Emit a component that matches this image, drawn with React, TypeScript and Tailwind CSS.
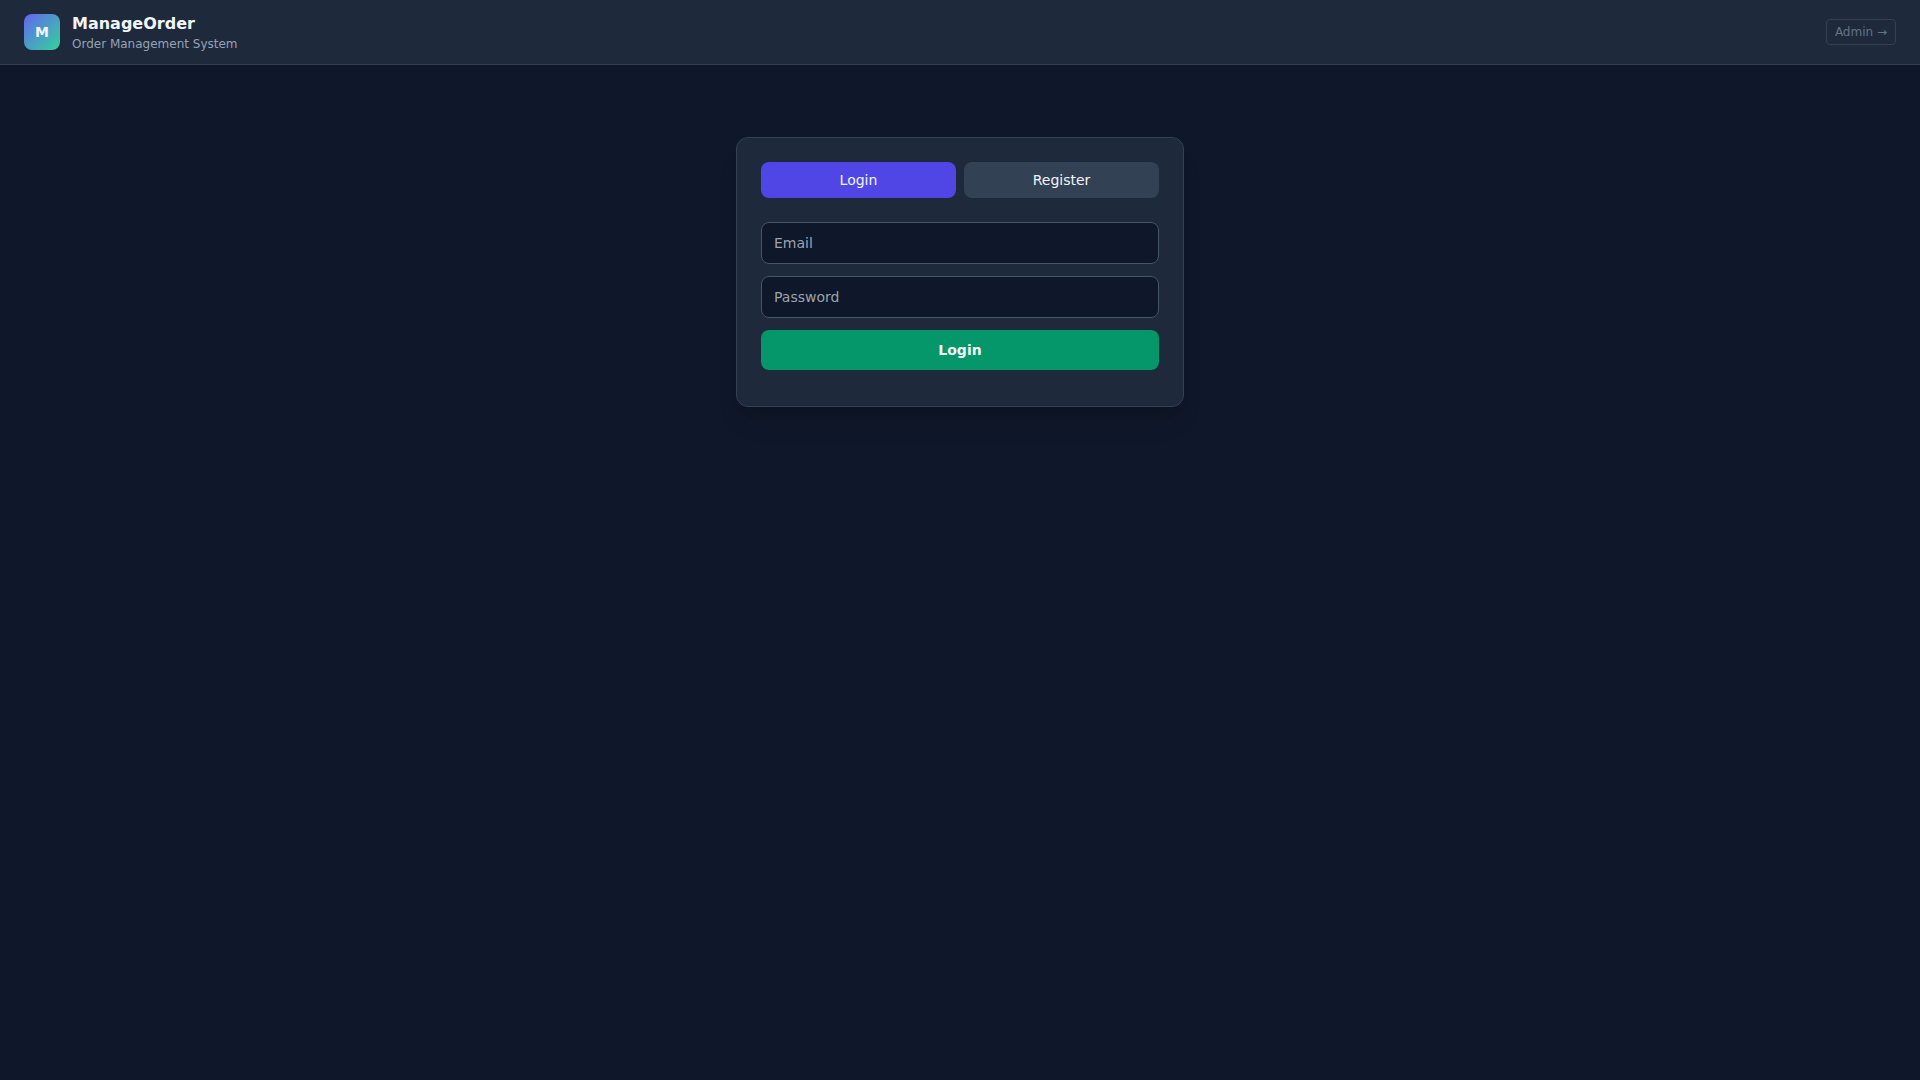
import { FormEvent, useState } from "react";

type Mode = "login" | "register";

const tabClass = "flex-1 rounded-lg py-2 text-sm";
const inputClass =
  "block w-full rounded-lg border border-[#475569] bg-[#0f172a] px-3 py-2.5 text-sm placeholder:text-[#9ca3af] outline-none focus:border-[#6366f1]";

function Header() {
  return (
    <header className="flex items-center justify-between border-b border-[#334155] bg-[#1e293b] px-6 py-3">
      <div className="flex items-center gap-3">
        <div className="flex h-9 w-9 items-center justify-center rounded-lg bg-linear-to-br/srgb from-[#6366f1] to-[#34d399] text-sm font-bold">
          M
        </div>
        <div>
          <h1 className="text-base font-bold">ManageOrder</h1>
          <p className="text-xs text-[#94a3b8]">Order Management System</p>
        </div>
      </div>
      <a href="#admin" className="rounded border border-[#334155] px-2 py-1 text-xs text-[#64748b] hover:text-[#cbd5e1]">
        Admin →
      </a>
    </header>
  );
}

function AuthCard() {
  const [mode, setMode] = useState<Mode>("login");
  const [form, setForm] = useState({ email: "", password: "" });
  const [message, setMessage] = useState("");

  const switchMode = (next: Mode) => {
    setMode(next);
    setMessage("");
  };

  function submit(event: FormEvent<HTMLFormElement>) {
    event.preventDefault();
    setMessage(form.email && form.password ? "" : "Email and password are required.");
  }

  return (
    <section className="mx-auto w-full max-w-md rounded-xl border border-[#334155] bg-[#1e293b] p-6 shadow-xl">
      <div className="mb-6 flex gap-2">
        <button type="button" onClick={() => switchMode("login")} className={`${tabClass} ${mode === "login" ? "bg-[#4f46e5]" : "bg-[#334155]"}`}>
          Login
        </button>
        <button type="button" onClick={() => switchMode("register")} className={`${tabClass} ${mode === "register" ? "bg-[#4f46e5]" : "bg-[#334155]"}`}>
          Register
        </button>
      </div>

      <form onSubmit={submit} noValidate className="grid gap-3">
        <input type="email" aria-label="Email" placeholder="Email" value={form.email} onChange={(event) => setForm({ ...form, email: event.target.value })} className={inputClass} />
        <input type="password" aria-label="Password" placeholder="Password" value={form.password} onChange={(event) => setForm({ ...form, password: event.target.value })} className={inputClass} />
        <button type="submit" className="w-full rounded-lg bg-[#059669] py-2.5 text-sm font-semibold hover:bg-[#10b981]">
          {mode === "login" ? "Login" : "Register"}
        </button>
      </form>

      <p role="status" className="mt-3 text-center text-sm text-[#f87171]">{message}</p>
    </section>
  );
}

export default function App() {
  return (
    <div className="min-h-screen bg-[#0f172a] font-['DejaVu_Sans',sans-serif] text-[#f1f5f9]">
      <Header />
      <main className="px-6 py-18">
        <AuthCard />
      </main>
    </div>
  );
}
